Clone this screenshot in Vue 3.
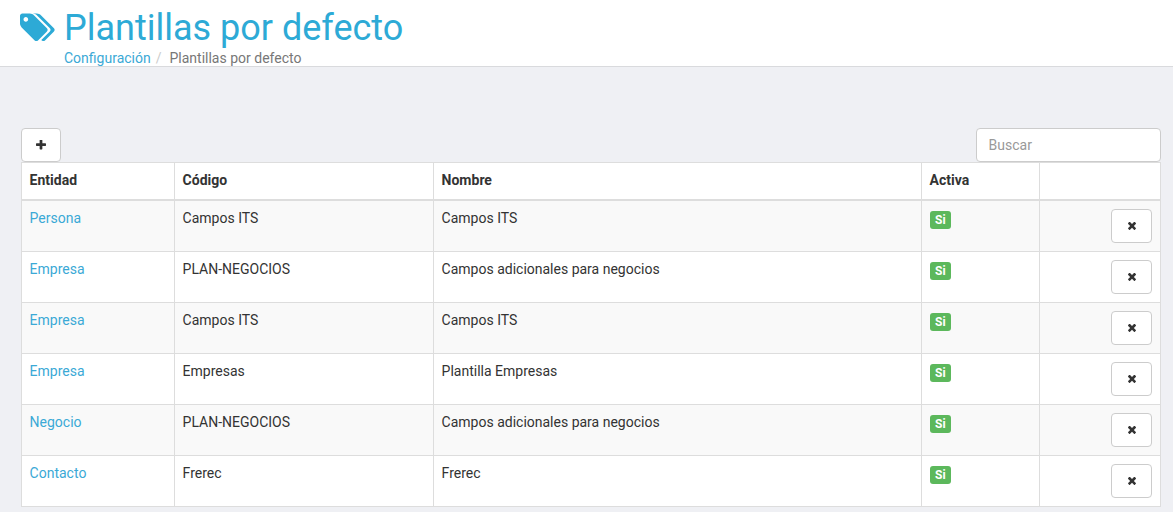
<script setup>
const rows = [
  { entidad: "Persona", codigo: "Campos ITS", nombre: "Campos ITS" },
  { entidad: "Empresa", codigo: "PLAN-NEGOCIOS", nombre: "Campos adicionales para negocios" },
  { entidad: "Empresa", codigo: "Campos ITS", nombre: "Campos ITS" },
  { entidad: "Empresa", codigo: "Empresas", nombre: "Plantilla Empresas" },
  { entidad: "Negocio", codigo: "PLAN-NEGOCIOS", nombre: "Campos adicionales para negocios" },
  { entidad: "Contacto", codigo: "Frerec", nombre: "Frerec" },
];
</script>

<template>
  <div class="page">
    <header class="head">
      <svg class="tags" viewBox="0 0 1920 1792" aria-hidden="true">
        <path
          fill="currentColor"
          d="M448 448q0-53-37.5-90.5t-90.5-37.5-90.5 37.5-37.5 90.5 37.5 90.5 90.5 37.5 90.5-37.5 37.5-90.5zm1067 576q0 53-37 90l-491 492q-39 37-91 37-53 0-90-37l-715-716q-38-37-64.5-101t-26.5-117v-416q0-52 38-90t90-38h416q53 0 117 26.5t102 64.5l715 714q37 39 37 91zm384 0q0 53-37 90l-491 492q-39 37-91 37-36 0-59-14t-53-45l470-470q37-37 37-90 0-52-37-91l-715-714q-38-38-102-64.5t-117-26.5h224q53 0 117 26.5t102 64.5l715 714q37 39 37 91z"
        />
      </svg>
      <div class="head-text">
        <h1 class="title">Plantillas por defecto</h1>
        <div class="crumbs">
          <a class="link" href="#">Configuración</a>
          <span class="sep">/</span>
          <span>Plantillas por defecto</span>
        </div>
      </div>
    </header>

    <main class="content">
      <div class="toolbar">
        <button class="btn" type="button" aria-label="Añadir">
          <svg class="ico" viewBox="0 192 1408 1408" aria-hidden="true">
            <path
              fill="currentColor"
              d="M1408 736v192q0 40-28 68t-68 28h-416v416q0 40-28 68t-68 28h-192q-40 0-68-28t-28-68v-416h-416q-40 0-68-28t-28-68v-192q0-40 28-68t68-28h416v-416q0-40 28-68t68-28h192q40 0 68 28t28 68v416h416q40 0 68 28t28 68z"
            />
          </svg>
        </button>
        <input class="search" type="text" placeholder="Buscar" />
      </div>

      <table class="grid">
        <colgroup>
          <col class="c1" />
          <col class="c2" />
          <col class="c3" />
          <col class="c4" />
          <col />
        </colgroup>
        <thead>
          <tr>
            <th>Entidad</th>
            <th>Código</th>
            <th>Nombre</th>
            <th>Activa</th>
            <th></th>
          </tr>
        </thead>
        <tbody>
          <tr v-for="(row, i) in rows" :key="i">
            <td><a class="link" href="#">{{ row.entidad }}</a></td>
            <td>{{ row.codigo }}</td>
            <td>{{ row.nombre }}</td>
            <td><span class="badge">Si</span></td>
            <td class="actions">
              <button class="btn" type="button" aria-label="Eliminar">
                <svg class="ico small" viewBox="110 238 1188 1316" aria-hidden="true">
                  <path
                    fill="currentColor"
                    d="M1298 1322q0 40-28 68l-136 136q-28 28-68 28t-68-28l-294-294-294 294q-28 28-68 28t-68-28l-136-136q-28-28-28-68t28-68l294-294-294-294q-28-28-28-68t28-68l136-136q28-28 68-28t68 28l294 294 294-294q28-28 68-28t68 28l136 136q28 28 28 68t-28 68l-294 294 294 294q28 28 28 68z"
                  />
                </svg>
              </button>
            </td>
          </tr>
        </tbody>
      </table>
    </main>
  </div>
</template>

<style scoped>
.page {
  min-height: 512px;
  background: #eff0f4;
  font-family: Roboto, "Liberation Sans", sans-serif;
  font-size: 14px;
  line-height: 20px;
  color: #333;
}

.head {
  display: flex;
  align-items: flex-start;
  gap: 9px;
  height: 66px;
  padding: 0 20px;
  background: #fff;
  border-bottom: 1px solid #d9dadd;
}

.tags {
  width: 35px;
  height: 33px;
  margin-top: 11px;
  color: #2daad6;
  flex: none;
}

.title {
  margin: 0;
  padding-top: 8px;
  font-size: 36px;
  font-weight: 400;
  line-height: 40px;
  color: #2daad6;
}

.crumbs {
  color: #777;
}

.link {
  color: #3ba9d6;
  text-decoration: none;
}

.sep {
  padding: 0 8px 0 5px;
  color: #ccc;
}

.content {
  padding: 61px 12px 0 21px;
}

.toolbar {
  display: flex;
  justify-content: space-between;
  align-items: flex-end;
}

.btn {
  display: flex;
  align-items: center;
  justify-content: center;
  width: 40px;
  height: 34px;
  padding: 0;
  background: #fff;
  border: 1px solid #ccc;
  border-radius: 4px;
  color: #333;
}

.ico {
  width: 10px;
  height: 10px;
}

.ico.small {
  width: 8px;
  height: 9px;
}

.search {
  box-sizing: border-box;
  width: 185px;
  height: 34px;
  padding: 6px 11.6px;
  background: #fff;
  border: 1px solid #ccc;
  border-radius: 4px;
  font: inherit;
  color: #555;
  outline: none;
}

.search::placeholder {
  color: #999;
  opacity: 1;
}

.grid {
  width: 1140px;
  border-collapse: collapse;
  table-layout: fixed;
  background: #fff;
  border: 1px solid #ddd;
}

.c1 {
  width: 153px;
}

.c2 {
  width: 259px;
}

.c3 {
  width: 488px;
}

.c4 {
  width: 118px;
}

.grid th,
.grid td {
  box-sizing: border-box;
  padding: 7px 8px 8px 7.6px;
  border: 1px solid #ddd;
  text-align: left;
  vertical-align: top;
}

.grid th {
  height: 37px;
  font-weight: 700;
  border-bottom-width: 2px;
}

.grid tbody tr:nth-child(odd) {
  background: #f9f9f9;
}

.badge {
  display: inline-block;
  margin-top: 3px;
  padding: 3px 5.5px;
  background: #5cb85c;
  border-radius: 3px;
  color: #fff;
  font-size: 12px;
  font-weight: 700;
  line-height: 12px;
  vertical-align: top;
}

.grid .actions {
  padding-top: 8px;
}

.actions .btn {
  width: 41px;
  margin-left: auto;
}
</style>
